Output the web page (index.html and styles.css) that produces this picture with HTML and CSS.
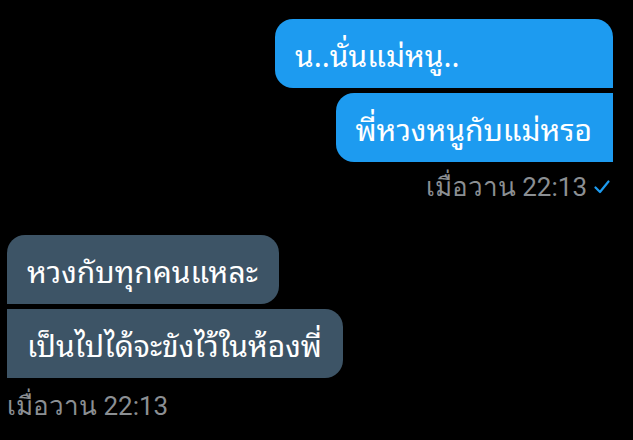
FILE: index.html
```html
<!DOCTYPE html>
<html lang="th">
<head>
<meta charset="utf-8">
<link rel="stylesheet" href="styles.css">
</head>
<body>
<div class="chat">
  <div class="group sent">
    <div class="bubble first wide">น..นั่นแม่หนู..</div>
    <div class="bubble last">พี่หวงหนูกับแม่หรอ</div>
    <div class="meta">เมื่อวาน 22:13 <svg class="tick" width="16" height="14" viewBox="0 0 16 14"><path d="M1.5 7.5 L6 12 L14.5 1.5" fill="none" stroke="#1d9bf0" stroke-width="2.2" stroke-linecap="round" stroke-linejoin="round"/></svg></div>
  </div>
  <div class="group recv">
    <div class="bubble first">หวงกับทุกคนแหละ</div>
    <div class="bubble last">เป็นไปได้จะขังไว้ในห้องพี่</div>
    <div class="meta">เมื่อวาน 22:13</div>
  </div>
</div>
</body>
</html>
```
FILE: styles.css
```css
html, body { margin: 0; padding: 0; background: #000; }
body { font-family: "Noto Sans Thai Looped", "Noto Sans Thai UI", "Loma", "Garuda", "Tlwg Typist", "Noto Sans", Roboto, sans-serif; width: 633px; height: 440px; overflow: hidden; }
.chat { display: flex; flex-direction: column; padding-top: 19px; }
.group { display: flex; flex-direction: column; gap: 5px; }
.sent { align-items: flex-end; padding-right: 20px; }
.recv { align-items: flex-start; padding-left: 7px; margin-top: 28px; }
.bubble { box-sizing: border-box; height: 69px; display: flex; align-items: center; padding: 0 21px 0 20px; font-size: 30px; color: #fff; border-radius: 18px; white-space: nowrap; }
.sent .bubble { background: #1d9bf0; }
.sent .first { border-bottom-right-radius: 0; }
.sent .last { border-top-right-radius: 0; border-bottom-right-radius: 0; }
.sent .wide { width: 338px; }
.recv .bubble { background: #3d5466; }
.recv .first { border-bottom-left-radius: 0; }
.recv .last { border-top-left-radius: 0; border-bottom-left-radius: 0; }
.meta { color: #8b8f93; font-family: Roboto, "Noto Sans", sans-serif; font-size: 26px; display: flex; align-items: center; gap: 7px; margin-top: -1px; padding-right: 3px; }
.recv .meta { margin-top: 2px; padding-right: 0; }
.tick { display: block; }
```
